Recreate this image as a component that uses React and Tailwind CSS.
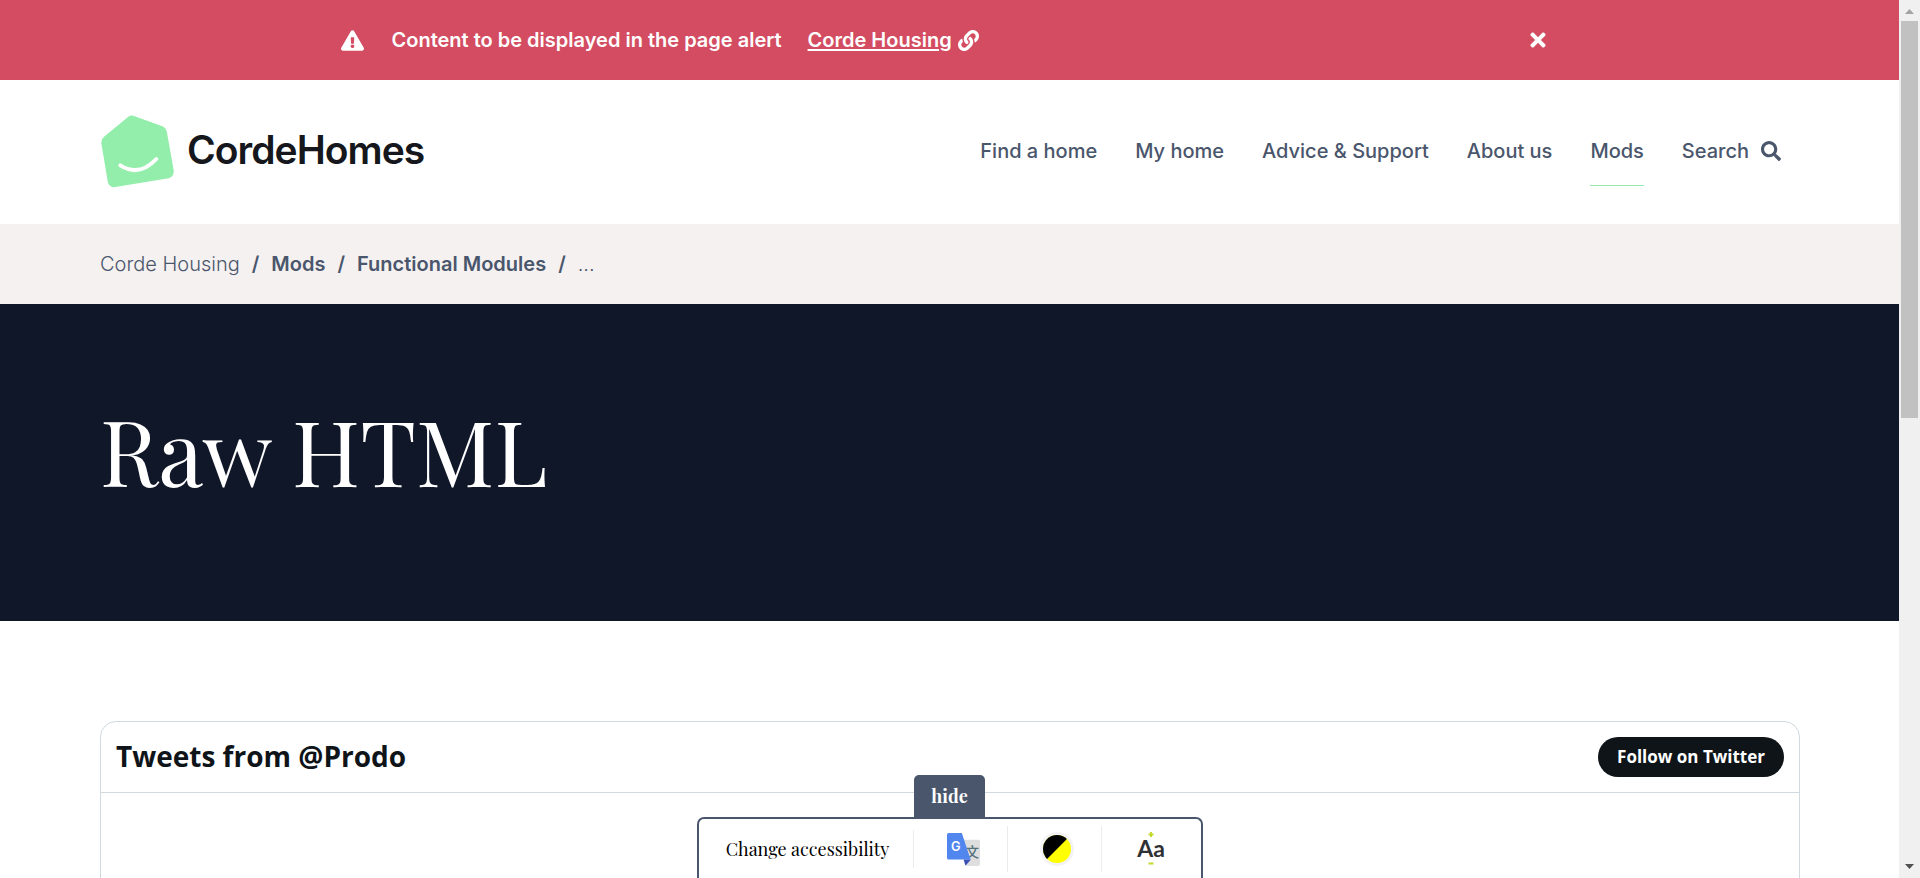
import React from "react";
import { FaExclamationTriangle, FaLink, FaTimes, FaSearch } from "react-icons/fa";

const navItems = ["Find a home", "My home", "Advice & Support", "About us", "Mods"];

function PageAlert() {
  return (
    <div role="alert" className="flex h-20 shrink-0 items-center justify-center bg-[#d34c61] text-xl font-semibold text-white">
      <div className="flex w-full max-w-[1218px] items-center">
        <FaExclamationTriangle className="mr-7 h-[21px] w-[23px]" />
        <p className="mr-[26px]">Content to be displayed in the page alert</p>
        <a href="#corde-housing" className="flex items-center gap-1.5">
          <span className="underline decoration-2 underline-offset-2">Corde Housing</span>
          <FaLink className="h-[21px] w-[21px]" />
        </a>
        <button type="button" aria-label="Close alert" className="ml-auto mr-3">
          <FaTimes className="h-[22px] w-[18px]" />
        </button>
      </div>
    </div>
  );
}

function Logo() {
  return (
    <a href="#home" className="flex items-center gap-[13px]">
      <svg viewBox="63 75 219 219" className="h-[73px] w-[73px]" aria-hidden="true">
        <path
          d="M145 80Q154 74 164 79L245 108Q259 113 261 128L281 240Q283 260 266 265L106 291Q87 294 83 274L64 160Q63 147 72 140Z"
          fill="#93eeab"
        />
        <path d="M121 226Q178 262 229 207" fill="none" stroke="#fff" strokeWidth="12" strokeLinecap="round" />
      </svg>
      <span className="pb-1 text-[39px] font-semibold leading-none tracking-tight text-[#15171c]">CordeHomes</span>
    </a>
  );
}

function Header() {
  return (
    <header className="flex h-36 shrink-0 items-center justify-between bg-white pb-0.5 pl-[101px] pr-[118px]">
      <Logo />
      <nav className="flex items-center gap-[38px] text-xl font-medium text-[#4a566c]">
        {navItems.map((item) => (
          <a
            key={item}
            href="#nav"
            className={
              item === "Mods"
                ? "border-y border-t-transparent border-b-[#93e9ad] py-5"
                : "border-y border-transparent py-5"
            }
          >
            {item}
          </a>
        ))}
        <button type="button" className="flex items-center gap-3">
          Search
          <FaSearch className="h-5 w-5" />
        </button>
      </nav>
    </header>
  );
}

function Breadcrumb() {
  return (
    <nav aria-label="Breadcrumb" className="flex h-20 shrink-0 items-center bg-[#f5f1f0] px-[100px] text-xl text-[#4a566c]">
      <ol className="flex items-center gap-3 font-semibold">
        <li><a href="#corde" className="font-light">Corde Housing</a></li>
        <li>/</li>
        <li><a href="#mods">Mods</a></li>
        <li>/</li>
        <li><a href="#functional">Functional Modules</a></li>
        <li>/</li>
        <li className="font-light">...</li>
      </ol>
    </nav>
  );
}

function TweetsCard() {
  return (
    <section className="h-[400px] rounded-2xl border border-[#cfd9de] font-['Open_Sans',sans-serif] text-[#0f1419]">
      <div className="flex h-[71px] items-center justify-between border-b border-[#cfd9de] px-[15px]">
        <h2 className="pb-0.5 text-[28px] font-bold leading-9">Tweets from @Prodo</h2>
        <a href="#follow" className="flex h-10 items-center rounded-full bg-[#0f1419] px-[19px] text-[17px] font-bold text-white">
          Follow on Twitter
        </a>
      </div>
    </section>
  );
}

function TranslateIcon() {
  return (
    <svg viewBox="0 0 98 98" className="h-[33px] w-[33px]" aria-hidden="true">
      <path d="M36 20H92Q98 20 98 26V92Q98 98 92 98H58Z" fill="#dedede" />
      <text x="55" y="70" fontSize="40" fontWeight="500" fontFamily="Noto Sans CJK SC, sans-serif" fill="#54717c">文</text>
      <path d="M49 79H71L55 97Z" fill="#3a4fb8" />
      <path d="M5 0H44L70 79H5Q0 79 0 74V5Q0 0 5 0Z" fill="#5186ee" />
      <text x="12" y="52" fontSize="38" fontWeight="600" fontFamily="Inter, sans-serif" fill="#fff">G</text>
    </svg>
  );
}

function ContrastIcon() {
  return (
    <svg viewBox="0 0 34 34" className="h-[34px] w-[34px]" aria-hidden="true">
      <circle cx="17" cy="17" r="17" fill="#f3f3f5" />
      <circle cx="17" cy="17" r="14" fill="#ffff00" />
      <path d="M7.1 26.9A14 14 0 0 1 26.9 7.1Z" fill="#000" />
    </svg>
  );
}

function TextSizeIcon() {
  return (
    <svg viewBox="0 0 32 34" className="h-[34px] w-8" aria-hidden="true">
      <path d="M16 0V5M13.500 2.500H18.500M13.500 31.500H18.500" stroke="#c6d92e" strokeWidth="2" />
      <text x="16" y="25" textAnchor="middle" fontSize="23" fontWeight="700" fontFamily="Lato, sans-serif" fill="#2f3135">Aa</text>
    </svg>
  );
}

function AccessibilityBar() {
  return (
    <div className="absolute inset-x-0 bottom-0 flex flex-col items-center font-['Playfair_Display','Liberation_Serif',serif]">
      <button type="button" className="h-[42px] w-[71px] rounded-t-[5px] bg-[#4a566c] text-lg font-bold text-white">
        hide
      </button>
      <div className="flex h-[61px] w-[506px] items-start rounded-t-[7px] border-2 border-b-0 border-[#4a566c] bg-white pt-[7px]">
        <p className="flex h-[46px] w-[214px] items-center justify-center pl-1 text-lg text-black">Change accessibility</p>
        <button type="button" aria-label="Translate" className="my-1 flex h-[38px] flex-1 items-center justify-center border-l border-[#ececec] pl-1.5">
          <TranslateIcon />
        </button>
        <button type="button" aria-label="Contrast" className="flex h-[46px] flex-1 items-center justify-center border-l border-[#ececec] pl-1.5">
          <ContrastIcon />
        </button>
        <button type="button" aria-label="Text size" className="flex h-[46px] w-[100px] items-center justify-center border-l border-[#ececec]">
          <TextSizeIcon />
        </button>
      </div>
    </div>
  );
}

function ScrollTrack() {
  return (
    <div aria-hidden="true" className="flex w-[21px] shrink-0 flex-col items-center justify-between bg-[#f0f0f0]">
      <div className="flex w-full flex-col items-center">
        <svg viewBox="0 0 21 21" className="h-[21px] w-[21px]"><path d="M6 14L10.500 9L15 14Z" fill="#a3a3a3" /></svg>
        <div className="h-[397px] w-[17px] bg-[#c1c1c1]" />
      </div>
      <svg viewBox="0 0 21 21" className="h-[21px] w-[21px]"><path d="M6 7L10.500 12L15 7Z" fill="#505050" /></svg>
    </div>
  );
}

export default function App() {
  return (
    <div className="flex h-screen overflow-hidden bg-white font-['Inter',sans-serif]">
      <div className="relative flex min-w-0 flex-1 flex-col overflow-hidden">
        <PageAlert />
        <Header />
        <Breadcrumb />
        <main className="min-h-0 flex-1 overflow-hidden">
          <div className="flex h-[317px] items-center bg-[#101729] px-[100px] pb-[26px]">
            <h1 className="font-['Playfair_Display','Liberation_Serif',serif] text-[90px] leading-none text-white">Raw HTML</h1>
          </div>
          <div className="pl-[100px] pr-[99px] pt-[100px]">
            <TweetsCard />
          </div>
        </main>
        <AccessibilityBar />
      </div>
      <ScrollTrack />
    </div>
  );
}
